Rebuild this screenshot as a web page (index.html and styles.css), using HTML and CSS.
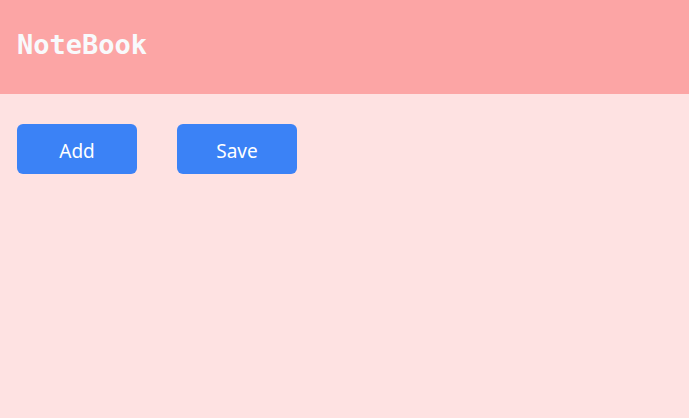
FILE: index.html
```html
<!DOCTYPE html>
<html>
<head>
<meta charset="utf-8">
<link rel="stylesheet" href="styles.css">
</head>
<body>
<header class="topbar">
  <h1 class="title">NoteBook</h1>
</header>
<main class="content">
  <div class="actions">
    <button class="btn">Add</button>
    <button class="btn">Save</button>
  </div>
</main>
</body>
</html>
```

FILE: styles.css
```css
html, body {
  margin: 0;
  padding: 0;
  height: 100%;
}
body {
  background: #fee2e2;
  font-family: "Noto Sans", sans-serif;
}
.topbar {
  background: #fca5a5;
  height: 94px;
  display: flex;
  align-items: center;
  padding: 0 17px 6px;
  box-sizing: border-box;
}
.title {
  margin: 0;
  font-family: "DejaVu Sans Mono", monospace;
  font-weight: bold;
  font-size: 27px;
  color: #f8fafc;
  line-height: 1;
}
.content {
  padding: 30px 17px;
}
.actions {
  display: flex;
  gap: 40px;
}
.btn {
  width: 120px;
  height: 50px;
  background: #3b82f6;
  color: #ffffff;
  border: none;
  border-radius: 6px;
  font-family: "Noto Sans", sans-serif;
  font-size: 19px;
  padding: 3px 0 0;
}
```
